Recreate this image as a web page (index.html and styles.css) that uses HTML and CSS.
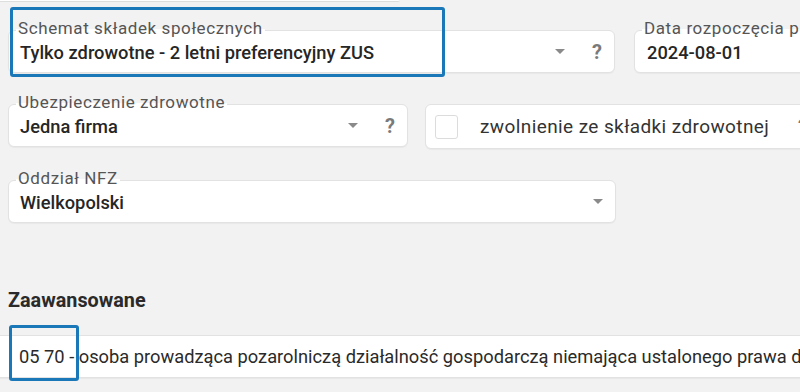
FILE: index.html
```html
<!DOCTYPE html>
<html lang="pl">
<head>
    <meta charset="UTF-8">
    <title>Składki</title>
    <link rel="stylesheet" href="styles.css">
</head>
<body>
<div class="prev"></div>
<div class="form">
    <div class="row">
        <div class="field w607">
            <span class="label">Schemat składek społecznych</span>
            <div class="box">
                <span class="value">Tylko zdrowotne - 2 letni preferencyjny ZUS</span>
                <span class="arrow"></span>
                <span class="help">?</span>
            </div>
            <div class="mark mark1"></div>
        </div>
        <div class="field wrest">
            <span class="label">Data rozpoczęcia prowadzenia</span>
            <div class="box">
                <span class="value plain">2024-08-01</span>
            </div>
        </div>
    </div>
    <div class="row row2">
        <div class="field w400">
            <span class="label">Ubezpieczenie zdrowotne</span>
            <div class="box">
                <span class="value">Jedna firma</span>
                <span class="arrow"></span>
                <span class="help">?</span>
            </div>
        </div>
        <div class="field wcheck">
            <div class="box check">
                <span class="tick"></span>
                <span class="check-text">zwolnienie ze składki zdrowotnej</span>
                <span class="help">?</span>
            </div>
        </div>
    </div>
    <div class="row row3">
        <div class="field w608">
            <span class="label">Oddział NFZ</span>
            <div class="box">
                <span class="value">Wielkopolski</span>
                <span class="arrow"></span>
            </div>
        </div>
    </div>
    <h3 class="section">Zaawansowane</h3>
</div>
<div class="code">
    <div class="box wide">
        <span class="code-text">05 70 - osoba prowadząca pozarolniczą działalność gospodarczą niemająca ustalonego prawa d</span>
    </div>
    <div class="mark mark2"></div>
</div>
</body>
</html>
```

FILE: styles.css
```css
html, body {
    margin: 0;
    padding: 0;
    width: 800px;
    height: 392px;
    overflow: hidden;
    background: #f2f2f2;
    font-family: Roboto, "Liberation Sans", sans-serif;
    color: #222;
}

.prev {
    width: 400px;
    height: 1px;
    background: #fff;
    border-bottom: 1px solid #dedede;
    border-radius: 0 0 6px 0;
}

.form {
    padding: 0 0 0 8px;
}

.row {
    display: flex;
    align-items: flex-start;
    gap: 19px;
    margin-top: 28px;
    white-space: nowrap;
}

.row2 {
    gap: 17px;
    margin-top: 31px;
}

.row3 {
    margin-top: 31px;
}

.field {
    position: relative;
    flex: none;
}

.w607 { width: 607px; }
.w400 { width: 400px; }
.w608 { width: 608px; }
.wrest { width: 300px; }
.wcheck { width: 420px; }

.label {
    position: absolute;
    left: 8px;
    top: -13px;
    padding: 0 2px;
    font-size: 17px;
    letter-spacing: 0.6px;
    color: #555;
    line-height: 22px;
    background: linear-gradient(#f2f2f2 55%, #fff 55%);
    z-index: 1;
}

.box {
    display: flex;
    align-items: center;
    height: 41px;
    padding: 0 12px 0 11px;
    background: #fff;
    border: 1px solid #e2e2e2;
    border-radius: 6px;
    box-shadow: 0 1px 1px rgba(0, 0, 0, 0.04);
}

.value {
    flex: 1;
    font-size: 18.3px;
    font-weight: 500;
    color: #262626;
    padding-top: 1px;
}

.value.plain {
    padding-left: 1px;
}

.arrow {
    flex: none;
    width: 0;
    height: 0;
    border-left: 5px solid transparent;
    border-right: 5px solid transparent;
    border-top: 5px solid #8a8a8a;
    margin-right: 27px;
}

.help {
    flex: none;
    font-size: 20px;
    font-weight: 700;
    color: #7a7a7a;
}

.w608 .arrow {
    margin-right: 0;
}

.check {
    height: 43px;
    padding-left: 9px;
}

.tick {
    flex: none;
    width: 21px;
    height: 22px;
    border: 1px solid #dcdcdc;
    border-radius: 3px;
    background: #fff;
    margin-right: 22px;
}

.check-text {
    flex: 1;
    font-size: 19px;
    letter-spacing: 0.4px;
    color: #333;
}

.check .help {
    margin-right: 24px;
}

.section {
    margin: 66px 0 0 0;
    font-size: 19.8px;
    font-weight: 700;
    color: #2a2a2a;
}

.code {
    position: relative;
    margin-top: 23px;
    white-space: nowrap;
}

.wide {
    width: 820px;
    padding-left: 19px;
    border-left: none;
    border-radius: 0;
}

.code-text {
    font-size: 18.3px;
    color: #2a2a2a;
}

.mark {
    position: absolute;
    border: 3px solid #1a77b8;
    border-radius: 3px;
    z-index: 2;
}

.mark1 {
    left: 2px;
    top: -23px;
    width: 429px;
    height: 64px;
}

.mark2 {
    left: 9px;
    top: -10px;
    width: 64px;
    height: 50px;
}
```
